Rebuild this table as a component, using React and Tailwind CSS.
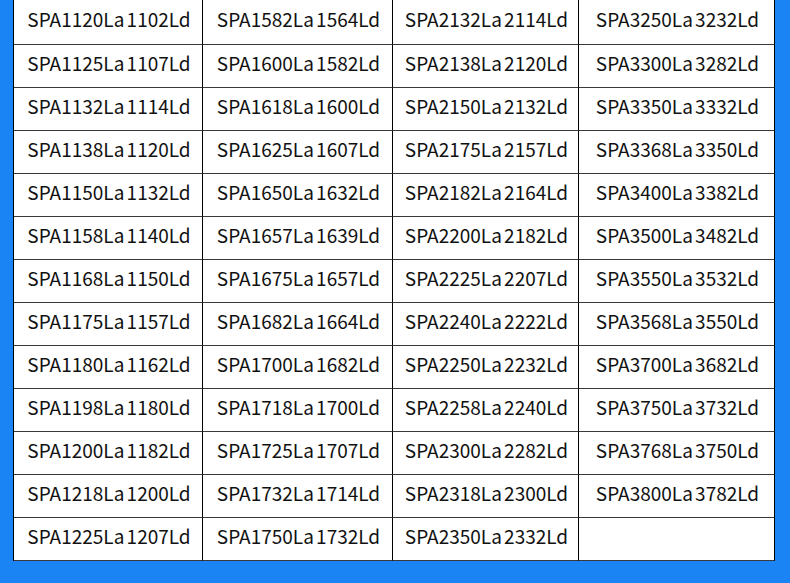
import React from 'react';

const rows = [
  ['SPA1120La 1102Ld', 'SPA1582La 1564Ld', 'SPA2132La 2114Ld', 'SPA3250La 3232Ld'],
  ['SPA1125La 1107Ld', 'SPA1600La 1582Ld', 'SPA2138La 2120Ld', 'SPA3300La 3282Ld'],
  ['SPA1132La 1114Ld', 'SPA1618La 1600Ld', 'SPA2150La 2132Ld', 'SPA3350La 3332Ld'],
  ['SPA1138La 1120Ld', 'SPA1625La 1607Ld', 'SPA2175La 2157Ld', 'SPA3368La 3350Ld'],
  ['SPA1150La 1132Ld', 'SPA1650La 1632Ld', 'SPA2182La 2164Ld', 'SPA3400La 3382Ld'],
  ['SPA1158La 1140Ld', 'SPA1657La 1639Ld', 'SPA2200La 2182Ld', 'SPA3500La 3482Ld'],
  ['SPA1168La 1150Ld', 'SPA1675La 1657Ld', 'SPA2225La 2207Ld', 'SPA3550La 3532Ld'],
  ['SPA1175La 1157Ld', 'SPA1682La 1664Ld', 'SPA2240La 2222Ld', 'SPA3568La 3550Ld'],
  ['SPA1180La 1162Ld', 'SPA1700La 1682Ld', 'SPA2250La 2232Ld', 'SPA3700La 3682Ld'],
  ['SPA1198La 1180Ld', 'SPA1718La 1700Ld', 'SPA2258La 2240Ld', 'SPA3750La 3732Ld'],
  ['SPA1200La 1182Ld', 'SPA1725La 1707Ld', 'SPA2300La 2282Ld', 'SPA3768La 3750Ld'],
  ['SPA1218La 1200Ld', 'SPA1732La 1714Ld', 'SPA2318La 2300Ld', 'SPA3800La 3782Ld'],
  ['SPA1225La 1207Ld', 'SPA1750La 1732Ld', 'SPA2350La 2332Ld', ''],
];

const App = () => {
  return (
    <div className="w-[790px] h-[583px] bg-[#1a84f4] pl-[13px] overflow-hidden">
      <div
        className="grid grid-cols-[189px_190px_186px_196px] w-fit bg-white border-l border-black text-[19px] leading-none text-[#111] [word-spacing:-2px]"
        style={{ fontFamily: '"Noto Sans CJK SC", "Noto Sans", sans-serif' }}
      >
        {rows.map((row, i) =>
          row.map((cell, j) => (
            <div
              key={`${i}-${j}`}
              className={`flex items-center justify-center pl-[2px] pb-[7px] whitespace-nowrap border-r border-r-black border-b border-b-[#3a3a3a] ${i === 0 ? 'h-[45px]' : 'h-[43px]'}`}
            >
              {cell}
            </div>
          ))
        )}
      </div>
    </div>
  );
};

export default App;
